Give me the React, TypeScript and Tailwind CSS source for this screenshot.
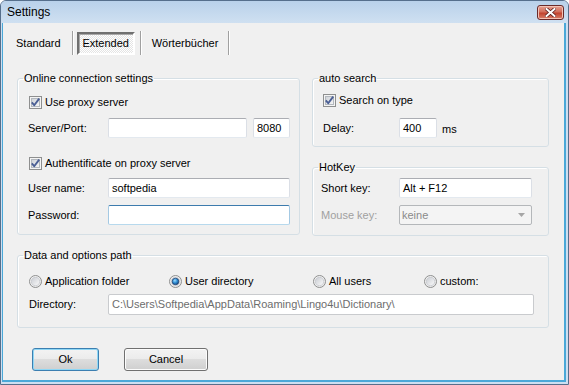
import React from 'react';

function CheckBox({ checked }: { checked: boolean }) {
  return (
    <svg width="13" height="13" viewBox="0 0 13 13" className="shrink-0">
      <defs>
        <linearGradient id="cbInner" x1="0" y1="0" x2="1" y2="1">
          <stop offset="0" stopColor="#cdd1d7" />
          <stop offset="1" stopColor="#f7f7f7" />
        </linearGradient>
      </defs>
      <rect x="0.5" y="0.5" width="12" height="12" fill="#f4f4f4" stroke="#8e8f8f" />
      <rect x="2.5" y="2.5" width="8" height="8" fill="url(#cbInner)" stroke="#b3b8be" />
      {checked && (
        <path d="M2.8 6.4 L5.2 9.2 L10.2 2.6" fill="none" stroke="#4b5f95" strokeWidth="1.9" strokeLinejoin="round" />
      )}
    </svg>
  );
}

function Radio({ checked }: { checked: boolean }) {
  return (
    <svg width="13" height="13" viewBox="0 0 13 13" className="shrink-0">
      <defs>
        <linearGradient id="rbOuter" x1="0" y1="0" x2="1" y2="1">
          <stop offset="0" stopColor="#f4f4f4" />
          <stop offset="1" stopColor="#e6e6e6" />
        </linearGradient>
        <linearGradient id="rbInner" x1="0" y1="0" x2="1" y2="1">
          <stop offset="0" stopColor="#c9ccd2" />
          <stop offset="1" stopColor="#fbfbfb" />
        </linearGradient>
        <radialGradient id="rbDot" cx="0.4" cy="0.35" r="0.7">
          <stop offset="0" stopColor="#9fdcff" />
          <stop offset="0.5" stopColor="#2f8ed4" />
          <stop offset="1" stopColor="#123f78" />
        </radialGradient>
      </defs>
      <circle cx="6.5" cy="6.5" r="6" fill="url(#rbOuter)" stroke="#8e8f8f" />
      <circle cx="6.5" cy="6.5" r="4.2" fill="url(#rbInner)" stroke="#bcc0c6" strokeWidth="0.6" />
      {checked && <circle cx="6.5" cy="6.5" r="3.3" fill="url(#rbDot)" stroke="#1d3f6e" strokeWidth="0.7" />}
    </svg>
  );
}

function TextBox({ value, focused, muted, className }: { value?: string; focused?: boolean; muted?: boolean; className: string }) {
  const border = focused
    ? 'border-t-[#3d7bad] border-x-[#a4c9e3] border-b-[#b7d9ed]'
    : 'border-t-[#abadb3] border-x-[#dbdfe6] border-b-[#e3e9ef]';
  return (
    <div className={`h-[20px] border rounded-[2px] bg-white flex items-center pl-[3px] whitespace-nowrap ${border} ${muted ? 'text-[#6d6d6d]' : ''} ${className}`}>
      {value}
    </div>
  );
}

function Button({ label, isDefault, className }: { label: string; isDefault?: boolean; className: string }) {
  return (
    <div
      className={`h-[23px] rounded-[3px] border flex items-center justify-center bg-[linear-gradient(#f3f3f3_0%,#ebebeb_50%,#dddddd_50%,#cfcfcf_100%)] ${
        isDefault ? 'border-[#3c7fb1] shadow-[inset_0_0_0_1px_#8fd7f5]' : 'border-[#707070] shadow-[inset_0_0_0_1px_#fcfcfc]'
      } ${className}`}
    >
      {label}
    </div>
  );
}

function TabSep() {
  return <div className="w-[2px] h-[24px] border-l border-l-[#a0a0a0] border-r border-r-white" />;
}

// legend sits at a fixed offset; inner padding goes on the wrapper so it doesn't shift the legend
function Group({ title, className, inner, children }: { title: string; className: string; inner: string; children: React.ReactNode }) {
  return (
    <fieldset className={`border border-[#d5dfe5] rounded-[3px] shadow-[inset_1px_1px_0_#fff] ${className}`}>
      <legend className="ml-[5px] px-[1px] leading-[13px]">{title}</legend>
      <div className={inner}>{children}</div>
    </fieldset>
  );
}

export default function App() {
  return (
    <div className="w-[569px] h-[385px] bg-white font-['Liberation_Sans',Arial,sans-serif] text-[11px] text-black">
      <div className="w-full h-full flex flex-col rounded-t-[6px] border border-[#566f8c] bg-[#cddff1] overflow-hidden">
        {/* title bar */}
        <div className="h-[22px] shrink-0 flex items-center justify-between pl-[6px] pr-[4px] bg-[linear-gradient(#b9d1ea,#cfe0f1)]">
          <span className="text-[12px] leading-none">Settings</span>
          <div className="w-[27px] h-[15px] rounded-[3px] border border-[#6a2a2a] bg-[linear-gradient(#e8a192_0%,#d16e5c_45%,#c2432f_55%,#d7806b_100%)] flex items-center justify-center shadow-[inset_0_0_0_1px_#f2c2b6]">
            <svg width="11" height="9" viewBox="0 0 11 9">
              <path d="M1.5 1 L9.5 8 M9.5 1 L1.5 8" stroke="#5a1f1f" strokeWidth="3.6" strokeLinecap="square" />
              <path d="M1.5 1 L9.5 8 M9.5 1 L1.5 8" stroke="#ffffff" strokeWidth="2" strokeLinecap="square" />
            </svg>
          </div>
        </div>

        {/* client area */}
        <div className="flex-1 ml-[1px] mr-[2px] mb-[2px] border-l border-r-2 border-b-2 border-[#4aa8d8] bg-[#f0f0f0] flex flex-col">
          {/* tabs */}
          <div className="mt-[8px] h-[24px] flex items-center">
            <span className="ml-[13px]">Standard</span>
            <div className="ml-[11px]"><TabSep /></div>
            <div className="ml-[3px] w-[58px] h-[23px] border-2 border-t-[#707070] border-l-[#707070] border-r-white border-b-white bg-[repeating-conic-gradient(#ffffff_0_25%,#e4e4e4_0_50%)] bg-size-[2px_2px] flex items-center justify-center shadow-[inset_1px_1px_0_#a8a8a8]">
              Extended
            </div>
            <div className="ml-[5px]"><TabSep /></div>
            <span className="ml-[10px]">Wörterbücher</span>
            <div className="ml-[10px]"><TabSep /></div>
          </div>

          {/* top groups */}
          <div className="mt-[17px] pl-[14px] flex gap-[12px] items-start">
            <Group title="Online connection settings" className="w-[283px]" inner="pl-[10px] pr-[9px] pb-[9px]">
              <div className="mt-[11px] h-[13px] flex items-center gap-[3px] ml-[1px]">
                <CheckBox checked />
                <span>Use proxy server</span>
              </div>
              <div className="mt-[9px] h-[20px] flex items-center">
                <span className="w-[80px]">Server/Port:</span>
                <TextBox className="w-[139px]" />
                <TextBox className="w-[37px] ml-[6px]" value="8080" />
              </div>
              <div className="mt-[19px] h-[13px] flex items-center gap-[3px] ml-[1px]">
                <CheckBox checked />
                <span>Authentificate on proxy server</span>
              </div>
              <div className="mt-[8px] h-[20px] flex items-center">
                <span className="w-[80px]">User name:</span>
                <TextBox className="w-[182px]" value="softpedia" />
              </div>
              <div className="mt-[7px] h-[20px] flex items-center">
                <span className="w-[80px]">Password:</span>
                <TextBox className="w-[182px]" focused />
              </div>
            </Group>

            <div className="w-[237px] flex flex-col">
              <Group title="auto search" className="" inner="pl-[10px] pb-[8px]">
                <div className="mt-[9px] h-[13px] flex items-center gap-[3px]">
                  <CheckBox checked />
                  <span>Search on type</span>
                </div>
                <div className="mt-[11px] h-[20px] flex items-center">
                  <span className="w-[76px]">Delay:</span>
                  <TextBox className="w-[38px]" value="400" />
                  <span className="ml-[5px] mt-[2px]">ms</span>
                </div>
              </Group>
              <Group title="HotKey" className="mt-[14px]" inner="pl-[8px] pb-[10px]">
                <div className="mt-[4px] h-[20px] flex items-center">
                  <span className="w-[78px]">Short key:</span>
                  <TextBox className="w-[133px]" value="Alt + F12" />
                </div>
                <div className="mt-[7px] h-[20px] flex items-center">
                  <span className="w-[78px] text-[#a0a0a0]">Mouse key:</span>
                  <div className="w-[133px] h-[20px] border border-[#b4b7ba] rounded-[2px] bg-[#f4f4f4] flex items-center justify-between pl-[2px] pr-[6px] text-[#8a8a8a]">
                    <span>keine</span>
                    <svg width="7" height="4" viewBox="0 0 7 4">
                      <path d="M0 0 H7 L3.5 4 Z" fill="#a6a6a6" />
                    </svg>
                  </div>
                </div>
              </Group>
            </div>
          </div>

          {/* data path group */}
          <div className="mt-[13px] pl-[14px]">
            <Group title="Data and options path" className="w-[532px]" inner="pl-[11px] pb-[12px]">
              <div className="mt-[13px] h-[13px] flex items-center">
                <div className="w-[140px] flex items-center gap-[3px]">
                  <Radio checked={false} />
                  <span>Application folder</span>
                </div>
                <div className="w-[144px] flex items-center gap-[3px]">
                  <Radio checked />
                  <span>User directory</span>
                </div>
                <div className="w-[111px] flex items-center gap-[3px]">
                  <Radio checked={false} />
                  <span>All users</span>
                </div>
                <div className="flex items-center gap-[3px]">
                  <Radio checked={false} />
                  <span>custom:</span>
                </div>
              </div>
              <div className="mt-[6px] h-[21px] flex items-center">
                <span className="w-[79px]">Directory:</span>
                <TextBox className="w-[426px] !h-[21px] !border-[#c9cbce]" muted value="C:\Users\Softpedia\AppData\Roaming\Lingo4u\Dictionary\" />
              </div>
            </Group>
          </div>

          {/* buttons */}
          <div className="mt-[20px] pl-[29px] flex">
            <Button label="Ok" isDefault className="w-[67px]" />
            <Button label="Cancel" className="w-[84px] ml-[25px]" />
          </div>
        </div>
      </div>
    </div>
  );
}
